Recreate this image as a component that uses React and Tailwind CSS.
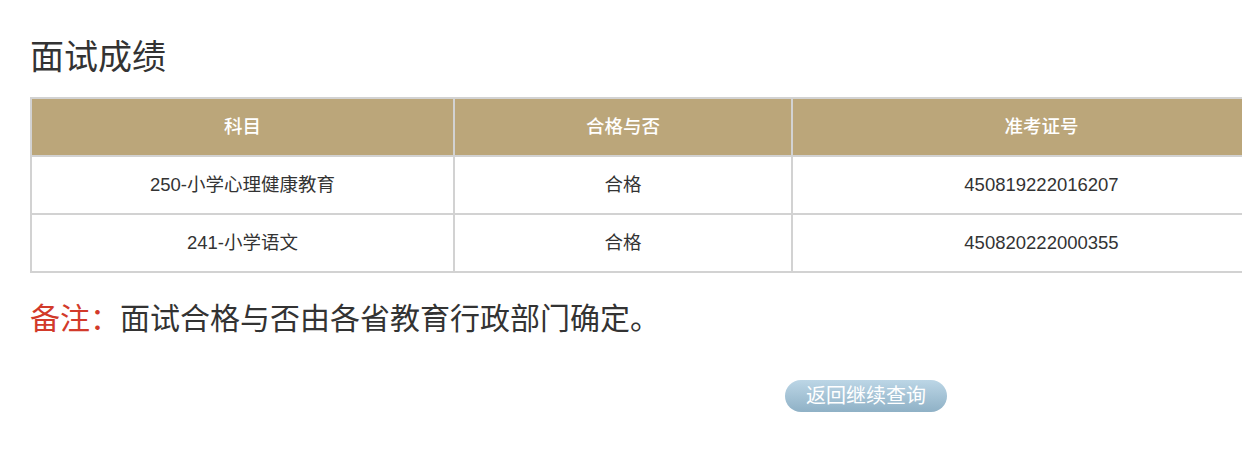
import React from 'react'

const rows = [
  { subject: '250-小学心理健康教育', pass: '合格', no: '450819222016207' },
  { subject: '241-小学语文', pass: '合格', no: '450820222000355' },
]

export default function App() {
  return (
    <div className='w-[1242px] h-[470px] overflow-hidden bg-white text-[#333]' style={{ fontFamily: '"Liberation Sans", "Noto Sans CJK SC", sans-serif' }}>
      <div className='pl-[30px] pt-[36px]'>
        <h1 className='text-[34px] leading-[42px] text-[#333] font-normal'>面试成绩</h1>

        <table className='mt-[19px] w-[1262px] border-collapse table-fixed text-[18.5px]'>
          <colgroup>
            <col className='w-[423px]' />
            <col className='w-[338px]' />
            <col />
          </colgroup>
          <thead>
            <tr className='h-[58px] bg-[#bba67a] text-white'>
              <th className='border-2 border-[#d2d2d2] font-medium'>科目</th>
              <th className='border-2 border-[#d2d2d2] font-medium'>合格与否</th>
              <th className='border-2 border-[#d2d2d2] font-medium'>准考证号</th>
            </tr>
          </thead>
          <tbody>
            {rows.map((r) => (
              <tr key={r.no} className='h-[58px] text-center'>
                <td className='border-2 border-[#d2d2d2]'>{r.subject}</td>
                <td className='border-2 border-[#d2d2d2]'>{r.pass}</td>
                <td className='border-2 border-[#d2d2d2]'>{r.no}</td>
              </tr>
            ))}
          </tbody>
        </table>

        <p className='mt-[26px] text-[30px] leading-[40px] text-[#333]'>
          <span className='text-[#d23a2a]'>备注：</span>面试合格与否由各省教育行政部门确定。
        </p>

        <div className='mt-[41px] pl-[755px]'>
          <button className='w-[162px] h-[32px] rounded-full bg-gradient-to-b from-[#bcd6e6] to-[#8fb1c6] text-white text-[20px] leading-[32px]'>
            返回继续查询
          </button>
        </div>
      </div>
    </div>
  )
}
